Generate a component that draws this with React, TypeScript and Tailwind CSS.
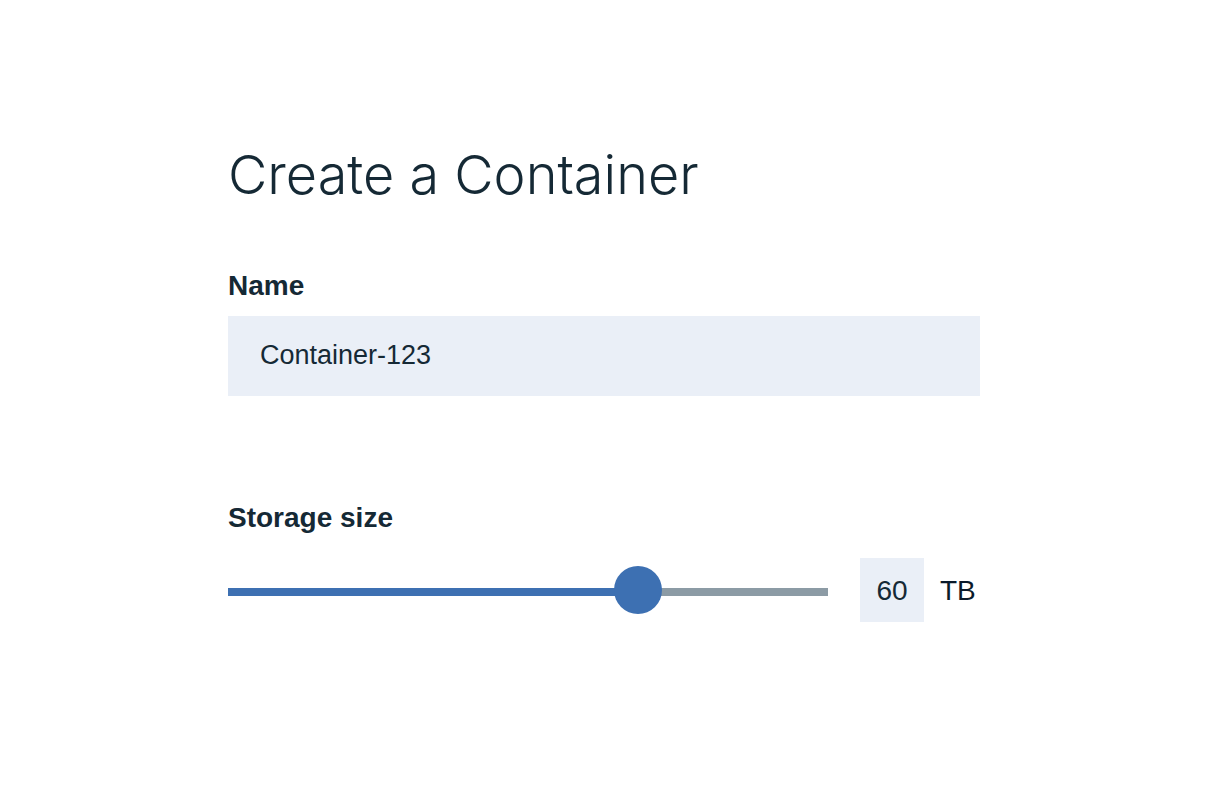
import { useState } from "react";
import type { CSSProperties } from "react";

const MIN_SIZE = 25;
const MAX_SIZE = 75;

export default function App() {
  const [name, setName] = useState("Container-123");
  const [size, setSize] = useState(60);

  const clamped = Math.min(MAX_SIZE, Math.max(MIN_SIZE, size));
  const fill = ((clamped - MIN_SIZE) / (MAX_SIZE - MIN_SIZE)) * 100;

  return (
    <main className="min-h-screen bg-white px-6 py-36 font-['Liberation_Sans',Arial,sans-serif] text-[28px] leading-8 text-[#152935]">
      <form className="mx-auto max-w-[752px]" onSubmit={(event) => event.preventDefault()}>
        <h1 className="font-['Inter','Liberation_Sans',sans-serif] text-[54px] font-light leading-[62px]">
          Create a Container
        </h1>

        <div className="mt-16 flex flex-col gap-3.5">
          <label htmlFor="name" className="font-bold">
            Name
          </label>
          <input
            id="name"
            type="text"
            value={name}
            onChange={(event) => setName(event.target.value)}
            className="h-20 w-full bg-[#eaeff7] px-8 pb-0.5 text-[27px] outline-none"
          />
        </div>

        <div className="mt-[106px] flex flex-col gap-6">
          <label htmlFor="size-slider" className="font-bold">
            Storage size
          </label>
          <div className="flex items-center">
            <input
              id="size-slider"
              type="range"
              min={MIN_SIZE}
              max={MAX_SIZE}
              value={clamped}
              onChange={(event) => setSize(Number(event.target.value))}
              style={{ "--fill": `${fill}%` } as CSSProperties}
              className="mt-1 h-12 min-w-0 flex-1 cursor-pointer appearance-none bg-transparent outline-none [&::-webkit-slider-runnable-track]:h-2 [&::-webkit-slider-runnable-track]:bg-[linear-gradient(to_right,#3d70b2_var(--fill),#8c9ba5_var(--fill))] [&::-webkit-slider-thumb]:-mt-[22px] [&::-webkit-slider-thumb]:size-12 [&::-webkit-slider-thumb]:appearance-none [&::-webkit-slider-thumb]:rounded-full [&::-webkit-slider-thumb]:bg-[#3d70b2]"
            />
            <input
              type="text"
              inputMode="numeric"
              id="size-value"
              aria-label="Storage size in terabytes"
              value={size}
              onChange={(event) => setSize(Number(event.target.value) || 0)}
              className="ml-8 size-16 bg-[#eaeff7] pt-0.5 text-center outline-none"
            />
            <label htmlFor="size-value" className="w-14 pt-0.5 pl-4 text-[#0a1a2b]">
              TB
            </label>
          </div>
        </div>
      </form>
    </main>
  );
}
